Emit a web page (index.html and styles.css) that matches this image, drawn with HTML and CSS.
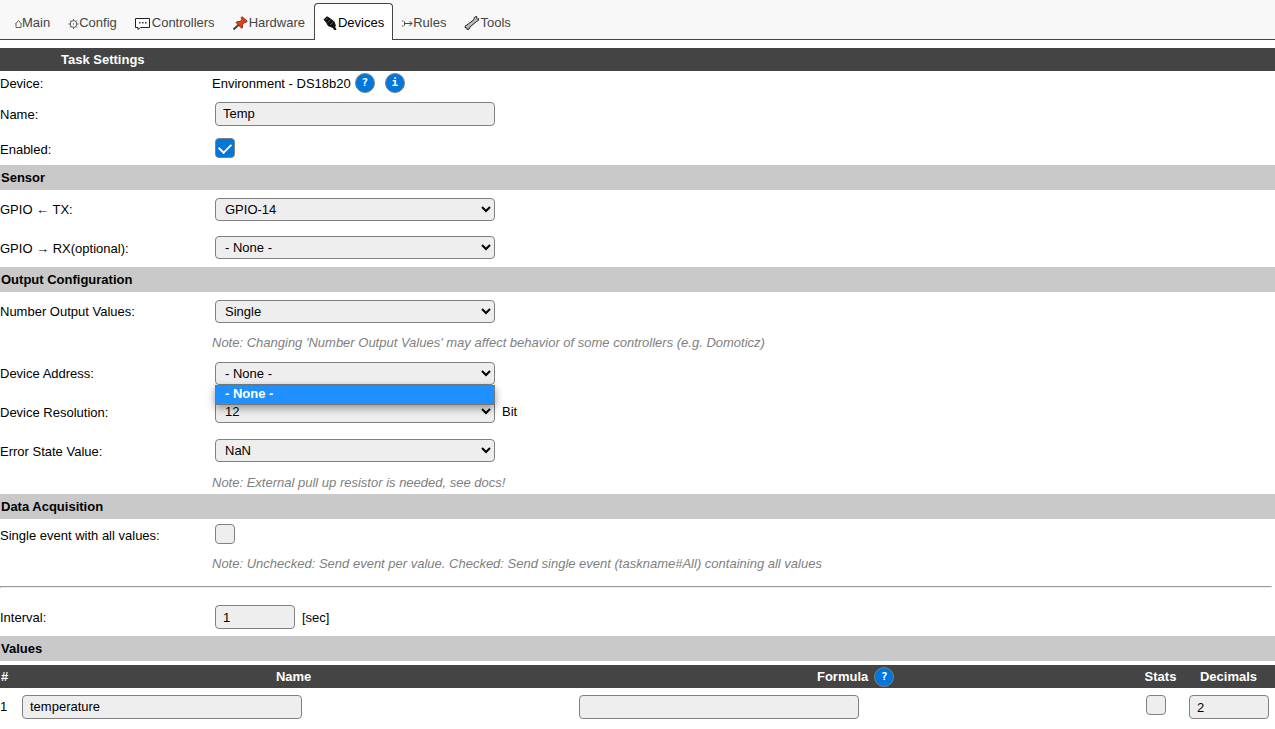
FILE: index.html
```html
<!DOCTYPE html>
<html lang="en">
<head>
<meta charset="utf-8">
<title>Task Settings</title>
<link rel="stylesheet" href="styles.css">
</head>
<body>
<nav class="menu">
  <a class="tab" href="#main"><svg width="7" height="14" viewBox="0 0 7 14" fill="none" stroke="#555" stroke-width=".9"><path d="M0 8.500 3.500 4.500 7 8.500M1 7.500V11.500H6V7.500"/></svg>Main</a>
  <a class="tab" href="#config"><svg width="11" height="14" viewBox="0 0 11 14" fill="none" stroke="#555"><circle cx="5.500" cy="8" r="3.400"/><circle cx="5.500" cy="8" r=".7" fill="#555" stroke="none"/><path d="M5.500 3v1.600M5.500 11.400V13M.5 8h1.600M8.900 8h1.600M2 4.500l1 1M8 10.500l1 1M9 4.500l-1 1M3 10.500l-1 1"/></svg>Config</a>
  <a class="tab" href="#controllers"><svg width="17" height="14" viewBox="0 0 17 14"><path d="M.5 2.500h14v9H5.500L3 13.500v-2H.5z" fill="#fff" stroke="#222" stroke-linejoin="round"/><path d="M4 6h1.500v1.500H4zM7 6h1.500v1.500H7zM10 6h1.500v1.500H10z" fill="#333"/></svg>Controllers</a>
  <a class="tab" href="#hardware"><svg width="16" height="14" viewBox="0 0 16 14"><path d="M.5 13.500 6 8.500" stroke="#444" stroke-width="2"/><path d="M9 .7 14.300 5 13 6.500 11.700 6.300 9.700 8.500 9.600 11.500 8.600 12.300 3 6.600 4 5.600 7 5.500 8.800 3.500 8 1.800z" fill="#e83c12" stroke="#6b2415" stroke-width=".8"/></svg>Hardware</a>
  <a class="tab active" href="#devices" aria-current="page"><svg width="15" height="14" viewBox="0 0 15 14"><path d="M.5 3.500 4 .3 6.500 1.800 11.500 5.500 13 10 10 12 5 10 3 6.500z" fill="#111"/><path d="M10.500 10.500 12.500 14" stroke="#111" stroke-width="2.500"/><path d="m2.500 4 2-2M4.500 6.500l3-3M7 9l3.500-3.500" stroke="#777" stroke-width=".7"/></svg>Devices</a>
  <a class="tab" href="#rules"><svg width="11" height="14" viewBox="0 0 11 14" fill="none" stroke="#444"><path d="M0 5h1.500M0 10h1.500M2.500 5.500v4M3 7.500h7M7.500 5 10 7.500 7.500 10"/></svg>Rules</a>
  <a class="tab" href="#tools"><svg width="16" height="14" viewBox="0 0 16 14"><path d="M3 9 10 3.500Q9.500 1.300 11.500.6L13 .8 12.600 2.300 13.500 3 14.800 2.700Q15 5 12.500 5.500L6 11Q5.500 14 3 13.500L2.800 12 1 11.500Q.8 9 3 9z" fill="#bbb" stroke="#222"/></svg>Tools</a>
</nav>
<main>
<form>
  <h1 class="title">Task Settings</h1>
  <div class="row short"><span class="name">Device:</span><span class="text">Environment - DS18b20</span><button type="button" class="help" aria-label="Help">?</button><button type="button" class="help" aria-label="Information">i</button></div>
  <div class="row"><label class="name" for="tname">Name:</label><input id="tname" class="field" type="text" value="Temp"></div>
  <div class="row medium"><label class="name" for="enabled">Enabled:</label><input id="enabled" class="check" type="checkbox" checked></div>

  <h2>Sensor</h2>
  <div class="row"><label class="name" for="tx">GPIO ← TX:</label><select id="tx" class="field"><option>GPIO-14</option></select></div>
  <div class="row tall"><label class="name" for="rx">GPIO → RX(optional):</label><select id="rx" class="field"><option>- None -</option></select></div>

  <h2>Output Configuration</h2>
  <div class="row"><label class="name" for="nov">Number Output Values:</label><select id="nov" class="field"><option>Single</option></select></div>
  <p class="note">Note: Changing 'Number Output Values' may affect behavior of some controllers (e.g. Domoticz)</p>
  <div class="row"><label class="name" for="addr">Device Address:</label>
    <div class="dropdown"><select id="addr" class="field"><option>- None -</option></select><div class="options" role="listbox" aria-label="Device Address"><div role="option" aria-selected="true">- None -</div></div></div></div>
  <div class="row tall"><label class="name" for="res">Device Resolution:</label><select id="res" class="field"><option>12</option></select><span>Bit</span></div>
  <div class="row tall"><label class="name" for="err">Error State Value:</label><select id="err" class="field"><option>NaN</option></select></div>
  <p class="note">Note: External pull up resistor is needed, see docs!</p>

  <h2>Data Acquisition</h2>
  <div class="row medium"><label class="name" for="single">Single event with all values:</label><input id="single" class="check" type="checkbox"></div>
  <p class="note">Note: Unchecked: Send event per value. Checked: Send single event (taskname#All) containing all values</p>
  <hr>
  <div class="row"><label class="name" for="interval">Interval:</label><input id="interval" class="field number" type="text" inputmode="numeric" value="1"><span class="text">[sec]</span></div>

  <h2>Values</h2>
  <table class="values">
    <colgroup><col class="c-index"><col class="c-name"><col><col class="c-stats"><col class="c-decimals"></colgroup>
    <thead><tr><th class="index">#</th><th>Name</th><th><div class="heading">Formula<button type="button" class="help" aria-label="Formula help">?</button></div></th><th>Stats</th><th>Decimals</th></tr></thead>
    <tbody><tr><td>1</td><td><input class="field" type="text" value="temperature" aria-label="Name"></td><td><input class="field" type="text" aria-label="Formula"></td><td><input class="check" type="checkbox" aria-label="Stats"></td><td><input class="field number" type="text" inputmode="numeric" value="2" aria-label="Decimals"></td></tr></tbody>
  </table>
</form>
</main>
</body>
</html>
```
FILE: styles.css
```css
* { box-sizing: border-box; }

body {
  margin: 0;
  background: #fff;
  color: #000;
  font: 13px/16px "Liberation Sans", Arial, sans-serif;
}

.menu {
  display: flex;
  align-items: flex-end;
  height: 40px;
  padding-left: 6px;
  background: #f8f8f8;
  border-bottom: 1px solid #444;
}

.tab {
  display: flex;
  align-items: center;
  height: 37px;
  margin-bottom: -1px;
  padding: 2px 8px 0;
  border: 1px solid transparent;
  border-bottom: 0;
  border-radius: 4px 4px 0 0;
  color: #444;
  text-decoration: none;
}

.tab.active {
  background: #fff;
  border-color: #444;
  color: #000;
}

.title {
  margin: 8px 0 0;
  padding: 4px 61px 3px;
  background: #444;
  color: #fff;
  font-size: 13px;
  line-height: 16px;
}

h2 {
  margin: 0;
  padding: 5px 1px 4px;
  background: #c9c9c9;
  font-size: 13px;
  line-height: 16px;
}

.row {
  display: flex;
  align-items: center;
  min-height: 38px;
}

.row.short { min-height: 24px; }
.row.medium { min-height: 32px; }
.row.tall { min-height: 39px; }

.name {
  flex: none;
  width: 212px;
  padding-top: 2px;
}

.text { padding-top: 2px; }

.field {
  width: 280px;
  height: 24px;
  margin: 0 7px 0 3px;
  padding: 0 7px 2px;
  border: 1px solid gray;
  border-radius: 4px;
  background: #eee;
  color: #000;
  font: inherit;
}

select.field {
  height: 23px;
  padding: 0 0 0 5px;
}

.field.number {
  width: 80px;
  padding-bottom: 0;
}

.check {
  display: grid;
  place-items: center;
  appearance: none;
  width: 20px;
  height: 20px;
  margin: 0 3px;
  border: 1px solid gray;
  border-radius: 4px;
  background: #eee;
}

.medium .check { margin-bottom: 2px; }

.check:checked { background: #0077dd; }

.check:checked::before {
  content: "";
  width: 10px;
  height: 6px;
  margin-bottom: 3px;
  border: solid #fff;
  border-width: 0 0 2px 2px;
  rotate: -45deg;
}

.help {
  width: 20px;
  height: 20px;
  margin-left: 6px;
  padding: 0;
  border: 1px solid gray;
  border-radius: 50%;
  background: #0077dd;
  color: #fff;
  font: bold 11px/18px "DejaVu Sans Mono", monospace;
}

.text + .help { margin-left: 4px; }
.help + .help { margin-left: 10px; }

.dropdown { position: relative; }

.options {
  position: absolute;
  z-index: 1;
  top: 100%;
  left: 3px;
  width: 280px;
  border: 1px solid #767676;
  background: #1e90ff;
  color: #fff;
  font-weight: bold;
  box-shadow: 0 3px 8px rgb(0 0 0 / 40%);
}

.options div { padding: 0 9px 2px; }

.note {
  margin: 0;
  padding: 5px 0 3px 212px;
  color: gray;
  font-style: italic;
}

hr {
  margin: 11px 3px 10px 0;
}

.values {
  width: 100%;
  margin-top: 4px;
  table-layout: fixed;
  border-collapse: collapse;
}

.values th, .values td { padding: 0; }
.values th { height: 23px; background: #444; color: #fff; }
.values th.index { padding-left: 1px; text-align: left; }
.values td { height: 38px; }
.values td .field, .values td .check { display: grid; margin: 0 7px; }
.values td .check { margin-bottom: 4px; }

.heading {
  display: flex;
  align-items: center;
  justify-content: center;
}

.c-index { width: 15px; }
.c-name { width: 43.7%; }
.c-stats { width: 43px; }
.c-decimals { width: 93px; }
```
